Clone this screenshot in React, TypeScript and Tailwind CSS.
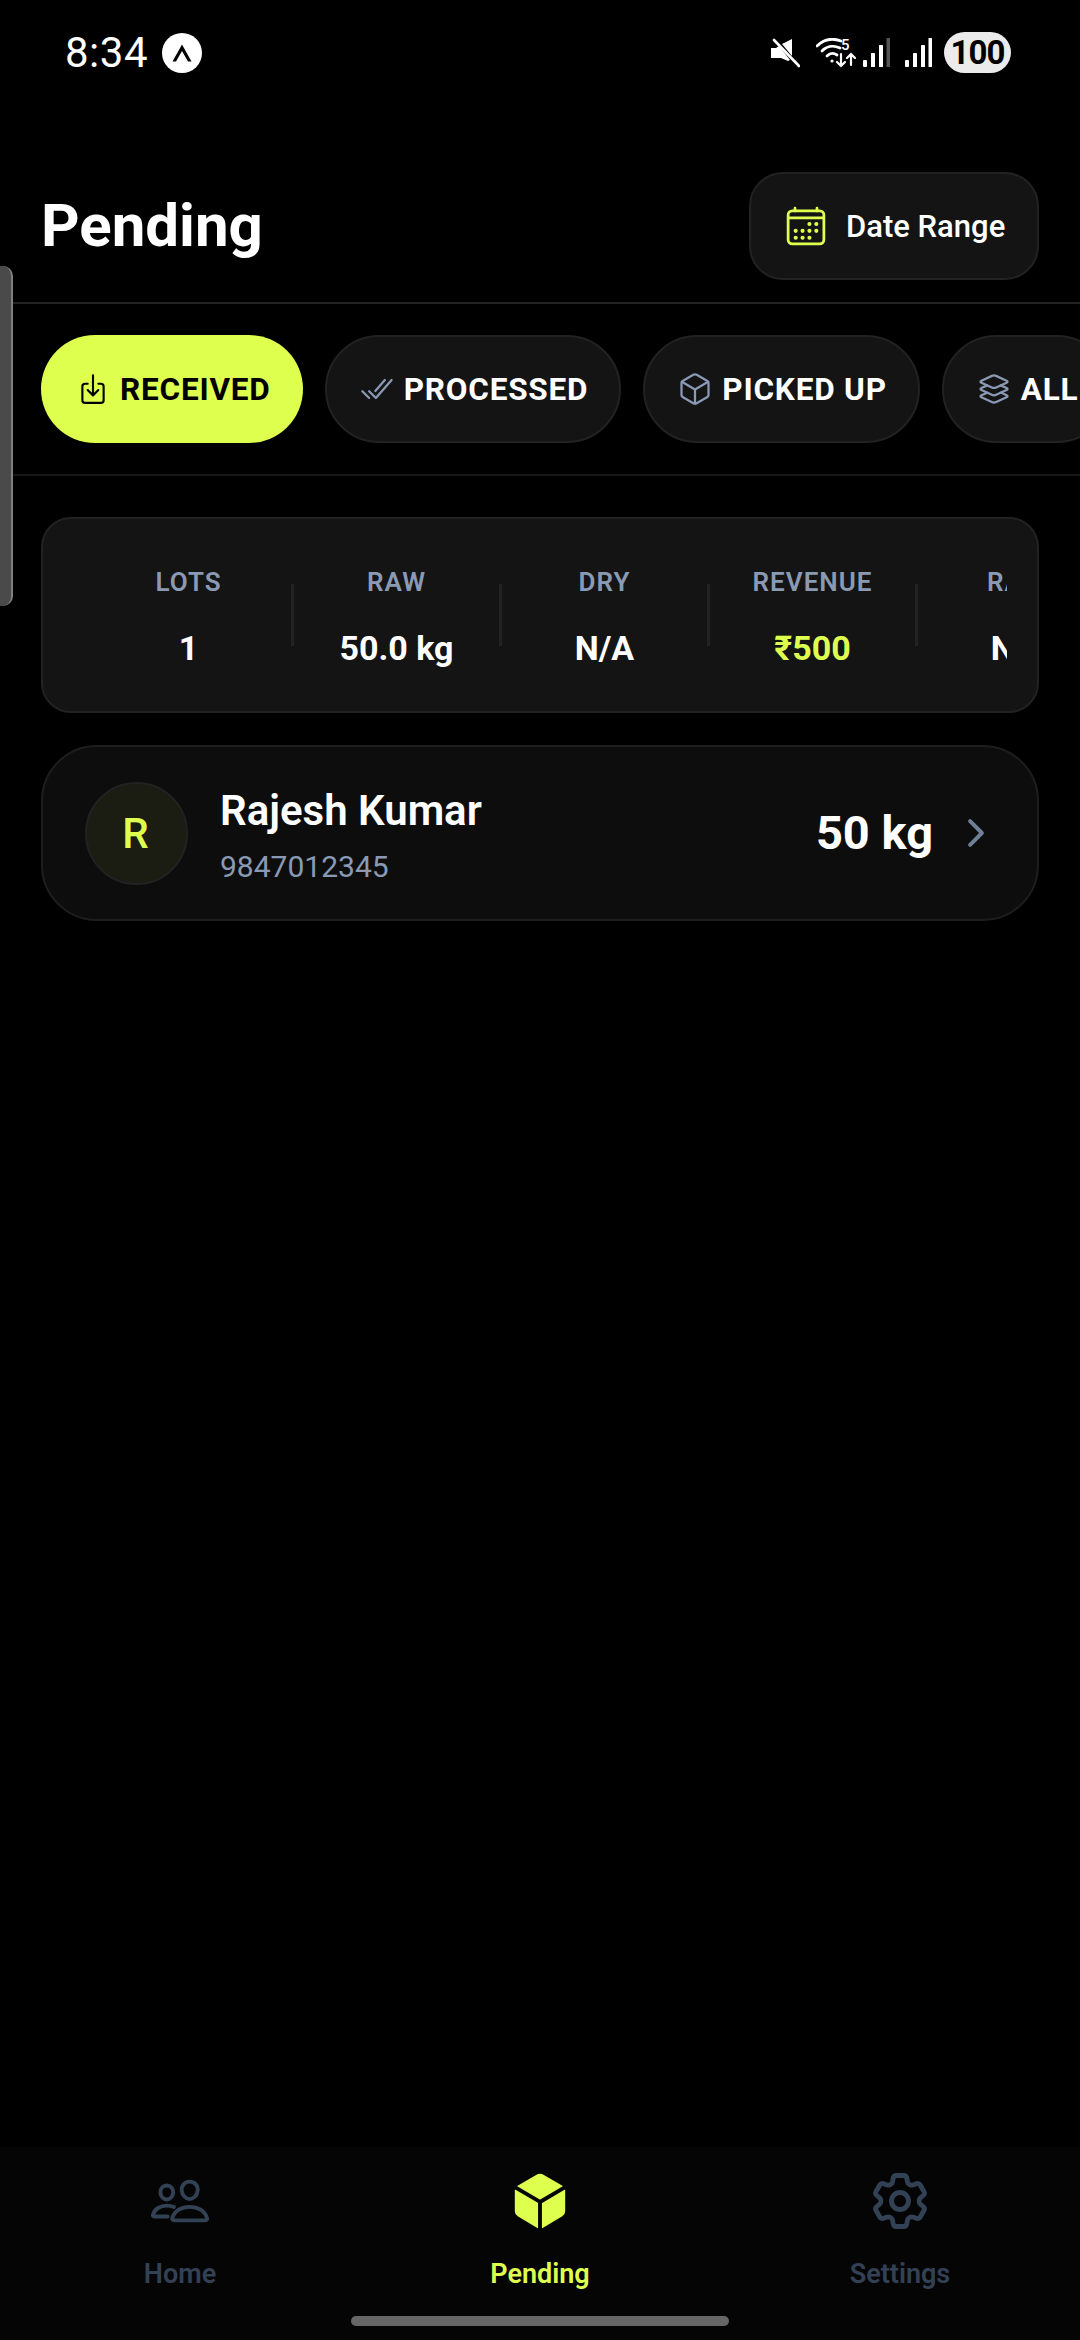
import React from "react";
import {
  IoCalendarOutline,
  IoDownloadOutline,
  IoCheckmarkDoneOutline,
  IoCubeOutline,
  IoLayersOutline,
  IoChevronForward,
  IoPeopleOutline,
  IoCube,
} from "react-icons/io5";
import { HiOutlineCog6Tooth } from "react-icons/hi2";

const tabs = [
  { label: "PROCESSED", Icon: IoCheckmarkDoneOutline },
  { label: "PICKED UP", Icon: IoCubeOutline },
  { label: "ALL", Icon: IoLayersOutline },
];

const stats = [
  { label: "LOTS", value: "1" },
  { label: "RAW", value: "50.0 kg" },
  { label: "DRY", value: "N/A" },
  { label: "REVENUE", value: "₹500", accent: true },
  { label: "RATE", value: "N/A" },
];

function ExpoBadge() {
  return (
    <svg width="40" height="40" viewBox="0 0 40 40">
      <circle cx="20" cy="20" r="20" fill="#fff" />
      <path d="M20 11.5 L10.5 28.5 H14 L20 18 L26 28.5 H29.5 Z" fill="#000" />
    </svg>
  );
}

function Mute() {
  return (
    <svg width="30" height="30" viewBox="0 0 30 30" fill="#fff">
      <path d="M1 10h5l3-2 11 14-2 1-7-3H1z" />
      <path d="M12 6l10-5v17z" />
      <path d="M3 1.5 L29 28.5" stroke="#000" strokeWidth="1" />
      <path d="M4 2 L29 28" stroke="#fff" strokeWidth="2.6" strokeLinecap="round" />
    </svg>
  );
}

function Wifi() {
  return (
    <div className="relative w-[40px] h-[30px]">
      <svg width="40" height="30" viewBox="0 0 40 30" fill="none" stroke="#fff" strokeLinecap="round" className="absolute inset-0">
        <path d="M1 8C8 1 17 0 25 3" strokeWidth="2.8" />
        <path d="M6 13c5-5 12-6 18-3" strokeWidth="2.8" />
        <path d="M11 18c3-3 7-3 10-1" strokeWidth="2.8" />
        <circle cx="16" cy="23" r="1.6" fill="#fff" stroke="none" />
        <path d="M25 16v12m-4-4l4 4 4-4" strokeWidth="2.2" />
        <path d="M35 27V16m-4 4l4-4 4 4" strokeWidth="2.2" />
      </svg>
      <span className="absolute left-[25px] top-[-2px] text-[15px] leading-[18px] font-medium text-white">5</span>
    </div>
  );
}

function Signal({ dim }: { dim?: boolean }) {
  return (
    <svg width="27" height="30" viewBox="0 0 27 30">
      <rect x="0" y="22" width="4" height="7" rx="1" fill="#fff" />
      <rect x="8" y="15" width="4" height="14" rx="0.6" fill="#fff" />
      <rect x="16" y="7" width="4" height="22" rx="0.6" fill="#fff" />
      <rect x="23.5" y="0" width="3.5" height="29" rx="0.6" fill={dim ? "#555" : "#fff"} />
    </svg>
  );
}

function StatusBar() {
  return (
    <div className="h-[102px] shrink-0 flex items-start justify-between pl-[65px] pr-[69px] pt-[32px]">
      <div className="flex items-center gap-[14px] h-[41px]">
        <span className="text-[42px] leading-none text-white tracking-[0.5px]">8:34</span>
        <ExpoBadge />
      </div>
      <div className="flex items-center h-[41px]">
        <Mute />
        <div className="ml-[16px]"><Wifi /></div>
        <div className="ml-[7px]"><Signal dim /></div>
        <div className="ml-[15px]"><Signal /></div>
        <div className="ml-[12px] w-[67px] h-[41px] rounded-full bg-[#ebebeb] flex items-center justify-center text-[33px] leading-none font-bold text-black tracking-[-1px]">
          100
        </div>
      </div>
    </div>
  );
}

export default function App() {
  return (
    <div
      className="relative w-[1080px] h-[2340px] bg-black flex flex-col overflow-hidden text-white"
      style={{ fontFamily: "Roboto, sans-serif" }}
    >
      <StatusBar />

      {/* header */}
      <div className="shrink-0 flex items-center justify-between pl-[41px] pr-[41px] pt-[70px] pb-[22px] border-b-2 border-[#222222]">
        <h1 className="text-[60px] leading-none font-bold">Pending</h1>
        <button className="h-[108px] w-[290px] rounded-[34px] bg-[#141414] border-2 border-[#222222] flex items-center pl-[33px] gap-[18px]">
          <IoCalendarOutline className="text-[#dfff4f]" size={44} />
          <span className="text-[31px] font-medium text-white pt-[2px]">Date Range</span>
        </button>
      </div>

      {/* status tabs */}
      <div className="shrink-0 flex items-center gap-[22px] pl-[41px] pt-[31px] pb-[31px] border-b-2 border-[#161616] overflow-hidden">
        <button className="h-[108px] shrink-0 rounded-full bg-[#dfff4f] flex items-center pl-[35px] pr-[32px] gap-[10px] text-black">
          <IoDownloadOutline size={34} />
          <span className="text-[31.5px] font-bold tracking-[0.8px] pt-[2px]">RECEIVED</span>
        </button>
        {tabs.map(({ label, Icon }) => (
          <button
            key={label}
            className="h-[108px] shrink-0 rounded-full bg-[#141414] border-2 border-[#222222] flex items-center pl-[32px] pr-[31px] gap-[9px]"
          >
            <Icon size={36} className="text-[#8a9ab5]" />
            <span className="text-[31.5px] font-bold tracking-[0.8px] text-white pt-[2px]">{label}</span>
          </button>
        ))}
      </div>

      <div className="flex flex-col gap-[32px] px-[41px] pt-[41px]">
        {/* summary */}
        <div className="h-[196px] rounded-[30px] bg-[#141414] border-2 border-[#222222] pl-[32px] pr-[30px] flex items-center">
          <div className="flex items-center w-full overflow-hidden pl-[11px]">
            {stats.map((s, i) => (
              <React.Fragment key={s.label}>
                <div className="w-[205px] shrink-0 pt-[5px] flex flex-col items-center">
                  <span className="text-[26px] leading-[30px] font-semibold tracking-[1px] text-[#8a9ab5]">{s.label}</span>
                  <span className={`mt-[31px] text-[34px] leading-[40px] font-bold ${s.accent ? "text-[#dfff4f]" : "text-white"}`}>
                    {s.value}
                  </span>
                </div>
                {i < stats.length - 1 && <div className="w-[3px] h-[62px] shrink-0 bg-[#222222]" />}
              </React.Fragment>
            ))}
          </div>
        </div>

        {/* customer row */}
        <div className="h-[176px] rounded-[56px] bg-[#0d0d0d] border-2 border-[#1e1e1e] flex items-center pl-[42px] pr-[40px]">
          <div className="w-[103px] h-[103px] rounded-full bg-[#1b1c12] border-2 border-[#222222] flex items-center justify-center text-[#dfff4f] text-[42px] font-medium pr-[2px]">
            R
          </div>
          <div className="ml-[32px] flex-1 pt-[6px] flex flex-col">
            <span className="text-[42px] leading-[48px] font-semibold text-white">Rajesh Kumar</span>
            <span className="mt-[14px] text-[30px] leading-[36px] text-[#8a9ab5]">9847012345</span>
          </div>
          <span className="text-[47px] font-bold text-white">50 kg</span>
          <IoChevronForward size={42} className="ml-[22px] text-[#6f7f96]" />
        </div>
      </div>

      {/* bottom nav */}
      <div className="relative mt-auto h-[193px] bg-[#050505] grid grid-cols-3 pt-[23px]">
        <div className="flex flex-col items-center">
          <IoPeopleOutline size={62} className="text-[#334155]" />
          <span className="mt-[26px] text-[27px] leading-[32px] font-semibold text-[#334155]">Home</span>
        </div>
        <div className="flex flex-col items-center">
          <IoCube size={62} className="text-[#dfff4f]" />
          <span className="mt-[26px] text-[27px] leading-[32px] font-semibold text-[#dfff4f]">Pending</span>
        </div>
        <div className="flex flex-col items-center">
          <HiOutlineCog6Tooth size={68} strokeWidth={1.7} className="text-[#334155] -my-[3px]" />
          <span className="mt-[26px] text-[27px] leading-[32px] font-semibold text-[#334155]">Settings</span>
        </div>
        <div className="absolute left-[351px] bottom-[14px] w-[378px] h-[10px] rounded-full bg-[#666666]" />
      </div>

      {/* edge panel handle */}
      <div className="absolute left-0 top-[266px] w-[13px] h-[340px] bg-[#4a4a4a] border-r-2 border-[#808080] rounded-r-[10px]" />
    </div>
  );
}
